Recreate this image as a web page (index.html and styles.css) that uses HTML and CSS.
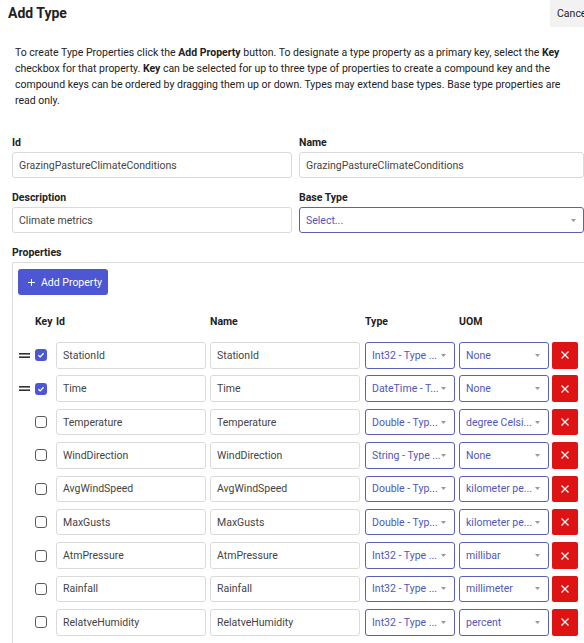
FILE: index.html
```html
<!DOCTYPE html>
<html>
<head>
<meta charset="utf-8">
<title>Add Type</title>
<link rel="stylesheet" href="styles.css">
</head>
<body>
<div class="page">
  <header class="topbar">
    <h1 class="title">Add Type</h1>
    <button class="cancel">Cancel</button>
  </header>

  <p class="intro">To create Type Properties click the <b>Add Property</b> button. To designate a type property as a primary key, select the <b>Key</b> checkbox for that property. <b>Key</b> can be selected for up to three type of properties to create a compound key and the compound keys can be ordered by dragging them up or down. Types may extend base types. Base type properties are read only.</p>

  <div class="form">
    <div class="field">
      <label class="lbl">Id</label>
      <div class="input">GrazingPastureClimateConditions</div>
    </div>
    <div class="field">
      <label class="lbl">Name</label>
      <div class="input">GrazingPastureClimateConditions</div>
    </div>
    <div class="field">
      <label class="lbl">Description</label>
      <div class="input">Climate metrics</div>
    </div>
    <div class="field">
      <label class="lbl">Base Type</label>
      <div class="input select wide"><span>Select...</span><svg class="caret" width="5" height="3" viewBox="0 0 5 3"><polygon points="0,0 5,0 2.5,3"/></svg></div>
    </div>
    <div class="field full">
      <label class="lbl">Properties</label>
      <div class="props">
        <button class="add"><svg width="7" height="7" viewBox="0 0 7 7"><path d="M3.5 0V7M0 3.5H7" stroke="#fff" stroke-width="1"/></svg><span>Add Property</span></button>

        <div class="row thead">
          <span></span><span>Key</span><span>Id</span><span>Name</span><span>Type</span><span>UOM</span><span></span>
        </div>

        <div class="rows">
          <div class="row">
            <svg class="handle" width="11" height="5" viewBox="0 0 11 5"><rect width="11" height="1.6"/><rect y="3.4" width="11" height="1.6"/></svg>
            <span class="cb on"><svg width="12" height="12" viewBox="0 0 12 12"><path d="M3.4 6.2L5.2 7.9L8.6 4.3" fill="none" stroke="#fff" stroke-width="1.3"/></svg></span>
            <div class="cell">StationId</div><div class="cell">StationId</div>
            <div class="sel"><span>Int32 - Type ...</span><svg class="caret" width="5" height="3" viewBox="0 0 5 3"><polygon points="0,0 5,0 2.5,3"/></svg></div>
            <div class="sel"><span>None</span><svg class="caret" width="5" height="3" viewBox="0 0 5 3"><polygon points="0,0 5,0 2.5,3"/></svg></div>
            <button class="del"><svg width="8" height="8" viewBox="0 0 8 8"><path d="M0.5 0.5L7.5 7.5M7.5 0.5L0.5 7.5" stroke="#fff" stroke-width="1.2"/></svg></button>
          </div>
          <div class="row">
            <svg class="handle" width="11" height="5" viewBox="0 0 11 5"><rect width="11" height="1.6"/><rect y="3.4" width="11" height="1.6"/></svg>
            <span class="cb on"><svg width="12" height="12" viewBox="0 0 12 12"><path d="M3.4 6.2L5.2 7.9L8.6 4.3" fill="none" stroke="#fff" stroke-width="1.3"/></svg></span>
            <div class="cell">Time</div><div class="cell">Time</div>
            <div class="sel"><span>DateTime - T...</span><svg class="caret" width="5" height="3" viewBox="0 0 5 3"><polygon points="0,0 5,0 2.5,3"/></svg></div>
            <div class="sel"><span>None</span><svg class="caret" width="5" height="3" viewBox="0 0 5 3"><polygon points="0,0 5,0 2.5,3"/></svg></div>
            <button class="del"><svg width="8" height="8" viewBox="0 0 8 8"><path d="M0.5 0.5L7.5 7.5M7.5 0.5L0.5 7.5" stroke="#fff" stroke-width="1.2"/></svg></button>
          </div>
          <div class="row">
            <span></span><span class="cb"></span>
            <div class="cell">Temperature</div><div class="cell">Temperature</div>
            <div class="sel"><span>Double - Typ...</span><svg class="caret" width="5" height="3" viewBox="0 0 5 3"><polygon points="0,0 5,0 2.5,3"/></svg></div>
            <div class="sel"><span>degree Celsi...</span><svg class="caret" width="5" height="3" viewBox="0 0 5 3"><polygon points="0,0 5,0 2.5,3"/></svg></div>
            <button class="del"><svg width="8" height="8" viewBox="0 0 8 8"><path d="M0.5 0.5L7.5 7.5M7.5 0.5L0.5 7.5" stroke="#fff" stroke-width="1.2"/></svg></button>
          </div>
          <div class="row">
            <span></span><span class="cb"></span>
            <div class="cell">WindDirection</div><div class="cell">WindDirection</div>
            <div class="sel"><span>String - Type ...</span><svg class="caret" width="5" height="3" viewBox="0 0 5 3"><polygon points="0,0 5,0 2.5,3"/></svg></div>
            <div class="sel"><span>None</span><svg class="caret" width="5" height="3" viewBox="0 0 5 3"><polygon points="0,0 5,0 2.5,3"/></svg></div>
            <button class="del"><svg width="8" height="8" viewBox="0 0 8 8"><path d="M0.5 0.5L7.5 7.5M7.5 0.5L0.5 7.5" stroke="#fff" stroke-width="1.2"/></svg></button>
          </div>
          <div class="row">
            <span></span><span class="cb"></span>
            <div class="cell">AvgWindSpeed</div><div class="cell">AvgWindSpeed</div>
            <div class="sel"><span>Double - Typ...</span><svg class="caret" width="5" height="3" viewBox="0 0 5 3"><polygon points="0,0 5,0 2.5,3"/></svg></div>
            <div class="sel"><span>kilometer pe...</span><svg class="caret" width="5" height="3" viewBox="0 0 5 3"><polygon points="0,0 5,0 2.5,3"/></svg></div>
            <button class="del"><svg width="8" height="8" viewBox="0 0 8 8"><path d="M0.5 0.5L7.5 7.5M7.5 0.5L0.5 7.5" stroke="#fff" stroke-width="1.2"/></svg></button>
          </div>
          <div class="row">
            <span></span><span class="cb"></span>
            <div class="cell">MaxGusts</div><div class="cell">MaxGusts</div>
            <div class="sel"><span>Double - Typ...</span><svg class="caret" width="5" height="3" viewBox="0 0 5 3"><polygon points="0,0 5,0 2.5,3"/></svg></div>
            <div class="sel"><span>kilometer pe...</span><svg class="caret" width="5" height="3" viewBox="0 0 5 3"><polygon points="0,0 5,0 2.5,3"/></svg></div>
            <button class="del"><svg width="8" height="8" viewBox="0 0 8 8"><path d="M0.5 0.5L7.5 7.5M7.5 0.5L0.5 7.5" stroke="#fff" stroke-width="1.2"/></svg></button>
          </div>
          <div class="row">
            <span></span><span class="cb"></span>
            <div class="cell">AtmPressure</div><div class="cell">AtmPressure</div>
            <div class="sel"><span>Int32 - Type ...</span><svg class="caret" width="5" height="3" viewBox="0 0 5 3"><polygon points="0,0 5,0 2.5,3"/></svg></div>
            <div class="sel"><span>millibar</span><svg class="caret" width="5" height="3" viewBox="0 0 5 3"><polygon points="0,0 5,0 2.5,3"/></svg></div>
            <button class="del"><svg width="8" height="8" viewBox="0 0 8 8"><path d="M0.5 0.5L7.5 7.5M7.5 0.5L0.5 7.5" stroke="#fff" stroke-width="1.2"/></svg></button>
          </div>
          <div class="row">
            <span></span><span class="cb"></span>
            <div class="cell">Rainfall</div><div class="cell">Rainfall</div>
            <div class="sel"><span>Int32 - Type ...</span><svg class="caret" width="5" height="3" viewBox="0 0 5 3"><polygon points="0,0 5,0 2.5,3"/></svg></div>
            <div class="sel"><span>millimeter</span><svg class="caret" width="5" height="3" viewBox="0 0 5 3"><polygon points="0,0 5,0 2.5,3"/></svg></div>
            <button class="del"><svg width="8" height="8" viewBox="0 0 8 8"><path d="M0.5 0.5L7.5 7.5M7.5 0.5L0.5 7.5" stroke="#fff" stroke-width="1.2"/></svg></button>
          </div>
          <div class="row">
            <span></span><span class="cb"></span>
            <div class="cell">RelatveHumidity</div><div class="cell">RelatveHumidity</div>
            <div class="sel"><span>Int32 - Type ...</span><svg class="caret" width="5" height="3" viewBox="0 0 5 3"><polygon points="0,0 5,0 2.5,3"/></svg></div>
            <div class="sel"><span>percent</span><svg class="caret" width="5" height="3" viewBox="0 0 5 3"><polygon points="0,0 5,0 2.5,3"/></svg></div>
            <button class="del"><svg width="8" height="8" viewBox="0 0 8 8"><path d="M0.5 0.5L7.5 7.5M7.5 0.5L0.5 7.5" stroke="#fff" stroke-width="1.2"/></svg></button>
          </div>
        </div>
      </div>
    </div>
  </div>
</div>
</body>
</html>
```

FILE: styles.css
```css
* { box-sizing: border-box; }
html, body { margin: 0; padding: 0; background: #fff; }
body {
  overflow: hidden;
  font-family: Roboto, "Liberation Sans", Arial, sans-serif;
  font-size: 10.5px;
  color: #222;
}
.page { width: 596px; }

.topbar {
  display: flex;
  justify-content: space-between;
  align-items: flex-start;
  height: 27px;
  padding-left: 8px;
}
.title {
  margin: 0;
  font-size: 14px;
  font-weight: 700;
  line-height: 27px;
  color: #222;
}
.cancel {
  height: 27px;
  padding: 0 7px;
  border: 0;
  background: #f2f2f2;
  font: 10.5px Roboto, "Liberation Sans", sans-serif;
  color: #222;
}

.intro {
  margin: 18px 0 0;
  padding: 0 0 0 15px;
  width: 566px;
  line-height: 16px;
  color: #222;
}
.intro b { font-weight: 700; }

.form {
  display: grid;
  grid-template-columns: 280px 285px;
  column-gap: 7px;
  row-gap: 13px;
  margin: 27px 0 0 12px;
}
.field.full { grid-column: 1 / -1; }
.lbl {
  display: block;
  font-weight: 700;
  line-height: 14px;
  margin-bottom: 2px;
  color: #222;
}
.input {
  height: 26px;
  border: 1px solid #dadada;
  border-radius: 3px;
  padding: 0 6px;
  display: flex;
  align-items: center;
  color: #444;
}
.input.select {
  border-color: #5b62b5;
  color: #5057b8;
  justify-content: space-between;
  padding-right: 7px;
}
.caret { fill: #999; flex: none; }

.props {
  margin-right: -12px;
  border: 1px solid #dcdcdc;
  border-right: 0;
  border-radius: 2px 0 0 2px;
  padding: 6px 5px 14px 5px;
}
.add {
  width: 90px;
  height: 26px;
  border: 0;
  border-radius: 3px;
  background: #4d57d4;
  color: #fff;
  display: flex;
  align-items: center;
  gap: 6px;
  padding: 0 0 0 10px;
  font: 10.5px Roboto, "Liberation Sans", sans-serif;
}

.row {
  display: grid;
  grid-template-columns: 17px 21px 154px 155px 94px 93px 26px;
  align-items: center;
  height: 26.5px;
}
.thead {
  height: 14px;
  line-height: 14px;
  margin: 20px 0 13px;
  font-weight: 700;
  color: #222;
}
.rows {
  display: flex;
  flex-direction: column;
  gap: 6.875px;
}
.handle { fill: #333; margin-left: 1px; }
.cb {
  width: 12px;
  height: 12px;
  border: 1px solid #5a5a5a;
  border-radius: 3px;
  display: block;
}
.cb.on {
  border: 0;
  background: #4d57d4;
}
.cb svg { display: block; }
.cell {
  width: 150px;
  height: 100%;
  border: 1px solid #dadada;
  border-radius: 3px;
  padding: 0 6px;
  display: flex;
  align-items: center;
  color: #444;
  white-space: nowrap;
  overflow: hidden;
}
.sel {
  width: 90px;
  height: 100%;
  border: 1px solid #5b62b5;
  border-radius: 3px;
  padding: 0 8px 0 6px;
  display: flex;
  align-items: center;
  justify-content: space-between;
  color: #5057b8;
  white-space: nowrap;
  overflow: hidden;
}
.del {
  width: 26px;
  height: 100%;
  border: 0;
  border-radius: 2px;
  background: #de1414;
  padding: 0;
  display: flex;
  align-items: center;
  justify-content: center;
}
.del svg { display: block; }
```
